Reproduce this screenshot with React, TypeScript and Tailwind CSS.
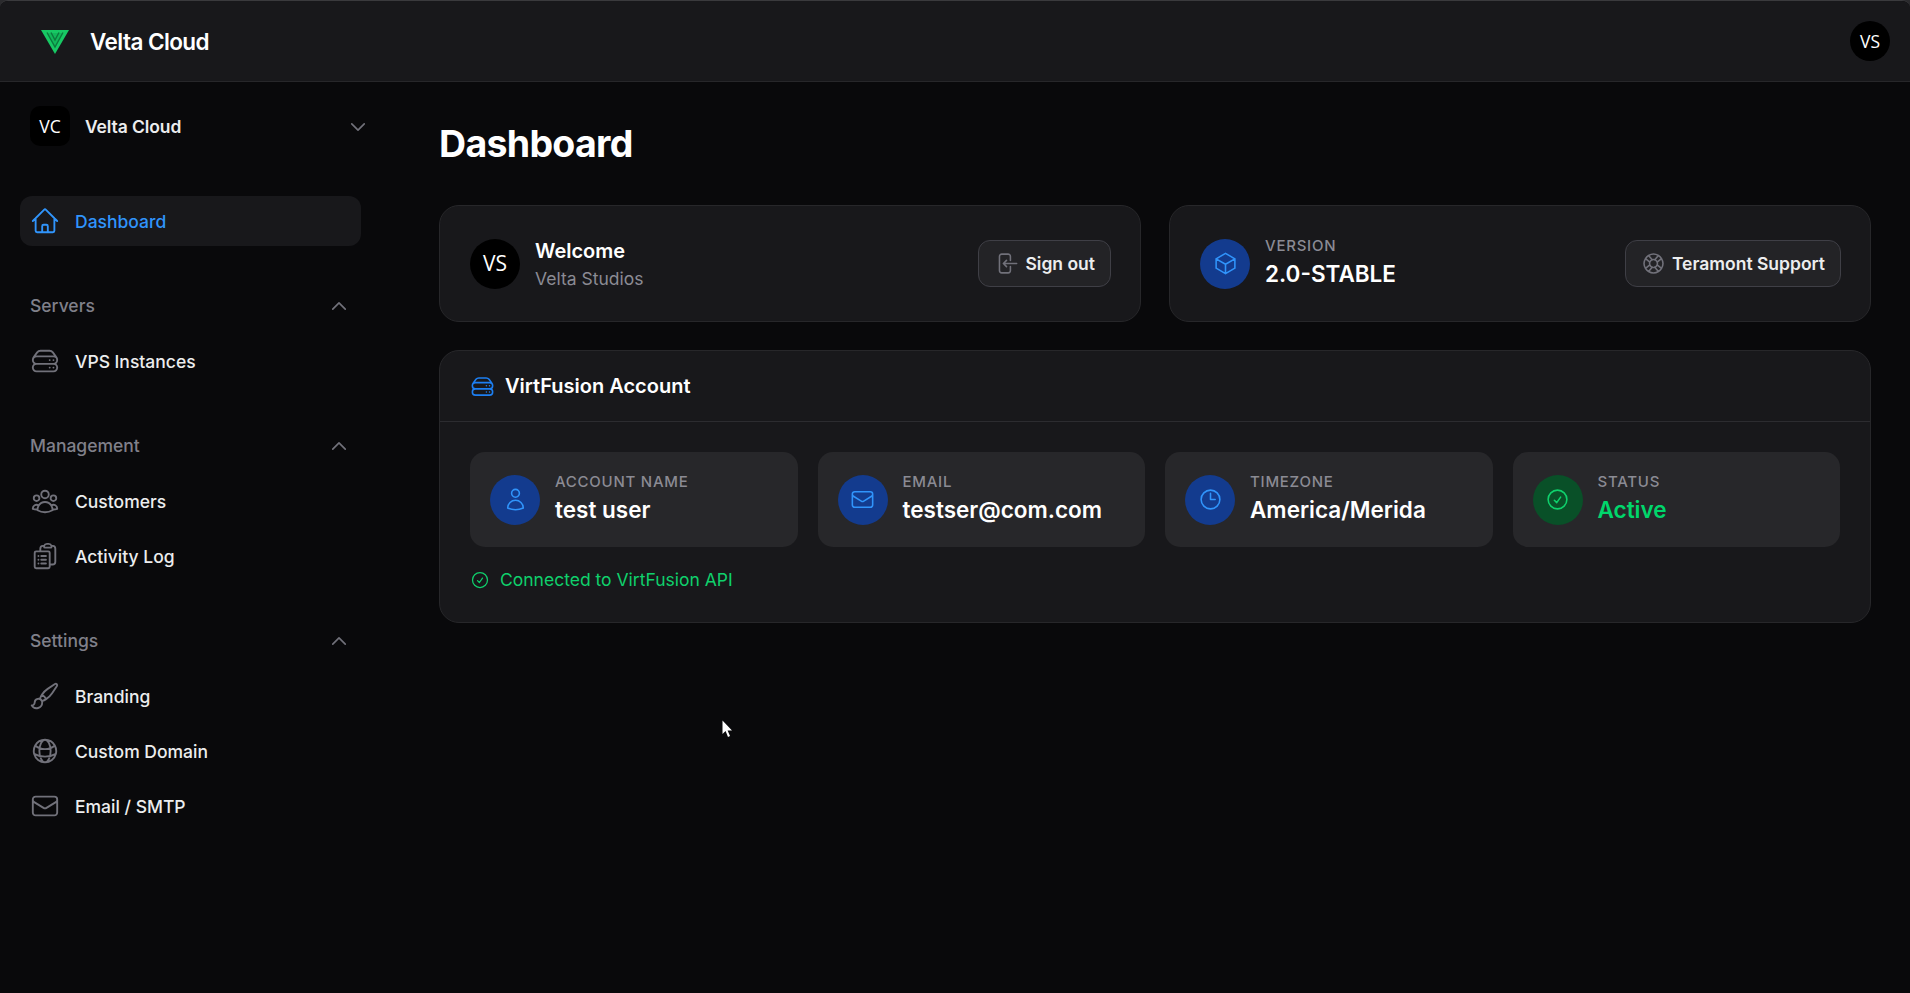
import React from "react";
import {
  HiOutlineArrowLeftEndOnRectangle,
  HiOutlineCheckCircle,
  HiOutlineChevronDown,
  HiOutlineChevronUp,
  HiOutlineClipboardDocumentList,
  HiOutlineClock,
  HiOutlineCube,
  HiOutlineEnvelope,
  HiOutlineGlobeAlt,
  HiOutlineHome,
  HiOutlineLifebuoy,
  HiOutlinePaintBrush,
  HiOutlineServerStack,
  HiOutlineUser,
  HiOutlineUserGroup,
} from "react-icons/hi2";

const NavItem = ({ icon: Icon, label, active }: { icon: React.ElementType; label: string; active?: boolean }) => (
  <div
    className={`flex h-[50px] w-[341px] items-center gap-[15px] rounded-[12px] px-[10px] text-[17.5px] font-medium ${
      active ? "bg-[#18181b] text-[#3094fb]" : "text-[#ecedee]"
    }`}
  >
    <Icon className={`h-[30px] w-[30px] shrink-0 ${active ? "text-[#3094fb]" : "text-[#71717a]"}`} />
    <span className="pt-[2px]">{label}</span>
  </div>
);

const NavSection = ({ title, children }: { title: string; children: React.ReactNode }) => (
  <div className="mt-[47px] w-[341px]">
    <div className="mb-[18px] flex h-[25px] items-center justify-between pr-[12px] pl-[10px] text-[17.5px] font-medium text-[#80808a]">
      <span className="pt-[2px]">{title}</span>
      <HiOutlineChevronUp strokeWidth={2} className="h-[20px] w-[20px] text-[#71717a]" />
    </div>
    <div className="flex flex-col gap-[5px]">{children}</div>
  </div>
);

const InfoTile = ({
  icon: Icon,
  label,
  value,
  green,
}: {
  icon: React.ElementType;
  label: string;
  value: string;
  green?: boolean;
}) => (
  <div className="flex h-[95px] items-center gap-[15px] rounded-[15px] bg-[#27272a] px-[20px]">
    <div
      className={`flex h-[50px] w-[50px] shrink-0 items-center justify-center rounded-full ${
        green ? "bg-[#095028] text-[#0fd06c]" : "bg-[#133b8e] text-[#3094fb]"
      }`}
    >
      <Icon className="h-[25px] w-[25px]" />
    </div>
    <div className="flex flex-col">
      <span className="text-[15px] leading-[20px] font-medium tracking-[0.75px] text-[#8b8b94] uppercase">{label}</span>
      <span className={`text-[22.5px] leading-[35px] font-semibold ${green ? "text-[#00d66b]" : "text-white"}`}>{value}</span>
    </div>
  </div>
);

const OutlineButton = ({ icon: Icon, label }: { icon: React.ElementType; label: string }) => (
  <div className="flex h-[47px] items-center gap-[6px] rounded-[12px] border border-[#3f3f46] bg-[#232326] px-[15px] text-[17.5px] font-semibold text-[#ecedee]">
    <Icon className="h-[25px] w-[25px] text-[#71717a]" />
    <span className="pt-[1px]">{label}</span>
  </div>
);

const App = () => {
  return (
    <div className="min-h-screen bg-[#2a2a2d] font-['Inter',sans-serif]">
      <div className="relative flex min-h-screen flex-col overflow-hidden rounded-t-[8px] border-t border-[#3a3a3d] bg-[#09090b]">
        <header className="flex h-[81px] shrink-0 items-center justify-between border-b border-[#27272a] bg-[#18181b] pr-[20px] pl-[41px]">
          <div className="flex items-center gap-[21px]">
            <svg width="28" height="24" viewBox="0 0 28 24" className="mt-[2px] shrink-0">
              <polygon points="0,0 28,0 14,24" fill="#17c964" />
              <polygon points="6,3 22,3 14,17" fill="#12b85a" />
              <path d="M6,2.5 L14,17 L22,2.5" fill="none" stroke="#0b7a3d" strokeWidth="1.4" />
              <path d="M10,2.5 L14,10 L18,2.5" fill="none" stroke="#0b7a3d" strokeWidth="1.4" />
            </svg>
            <span className="pt-[2px] text-[22.5px] font-semibold tracking-[-0.56px] text-white">Velta Cloud</span>
          </div>
          <div className="flex h-[40px] w-[40px] items-center justify-center rounded-full bg-black font-['Open_Sans',sans-serif] text-[17.5px] text-white">
            VS
          </div>
        </header>

        <div className="flex flex-1">
          <aside className="w-[399px] shrink-0 pt-[24px] pl-[20px]">
            <div className="flex w-[348px] items-center justify-between pl-[10px]">
              <div className="flex items-center gap-[15px]">
                <div className="flex h-[40px] w-[40px] items-center justify-center rounded-[10px] bg-black font-['Open_Sans',sans-serif] text-[17.5px] text-white">
                  VC
                </div>
                <span className="pt-[2px] text-[17.5px] font-semibold tracking-[-0.1px] text-[#ecedee]">Velta Cloud</span>
              </div>
              <HiOutlineChevronDown strokeWidth={2} className="mt-[2px] h-[20px] w-[20px] text-[#71717a]" />
            </div>

            <div className="mt-[50px]">
              <NavItem icon={HiOutlineHome} label="Dashboard" active />
            </div>

            <NavSection title="Servers">
              <NavItem icon={HiOutlineServerStack} label="VPS Instances" />
            </NavSection>
            <NavSection title="Management">
              <NavItem icon={HiOutlineUserGroup} label="Customers" />
              <NavItem icon={HiOutlineClipboardDocumentList} label="Activity Log" />
            </NavSection>
            <NavSection title="Settings">
              <NavItem icon={HiOutlinePaintBrush} label="Branding" />
              <NavItem icon={HiOutlineGlobeAlt} label="Custom Domain" />
              <NavItem icon={HiOutlineEnvelope} label="Email / SMTP" />
            </NavSection>
          </aside>

          <main className="flex-1 pt-[39px] pr-[39px] pl-[40px]">
            <h1 className="text-[37.5px] leading-[45px] font-bold tracking-[-0.7px] text-white">Dashboard</h1>

            <div className="mt-[39px] grid grid-cols-2 gap-[28px]">
              <div className="flex h-[117px] items-center justify-between rounded-[20px] border border-[#27272a] bg-[#18181b] pr-[29px] pl-[30px]">
                <div className="flex items-center gap-[15px]">
                  <div className="flex h-[50px] w-[50px] items-center justify-center rounded-full bg-black font-['Open_Sans',sans-serif] text-[21px] text-white">
                    VS
                  </div>
                  <div className="flex flex-col pt-[2px]">
                    <span className="text-[20px] leading-[28px] font-semibold text-white">Welcome</span>
                    <span className="text-[17.5px] leading-[28px] text-[#8b8b94]">Velta Studios</span>
                  </div>
                </div>
                <OutlineButton icon={HiOutlineArrowLeftEndOnRectangle} label="Sign out" />
              </div>

              <div className="flex h-[117px] items-center justify-between rounded-[20px] border border-[#27272a] bg-[#18181b] pr-[29px] pl-[30px]">
                <div className="flex items-center gap-[15px]">
                  <div className="flex h-[50px] w-[50px] items-center justify-center rounded-full bg-[#133b8e] text-[#3094fb]">
                    <HiOutlineCube className="h-[25px] w-[25px]" />
                  </div>
                  <div className="flex flex-col">
                    <span className="text-[15px] leading-[20px] font-medium tracking-[0.75px] text-[#8b8b94] uppercase">Version</span>
                    <span className="text-[22.5px] leading-[35px] font-semibold text-white">2.0-STABLE</span>
                  </div>
                </div>
                <OutlineButton icon={HiOutlineLifebuoy} label="Teramont Support" />
              </div>
            </div>

            <section className="mt-[28px] rounded-[20px] border border-[#27272a] bg-[#18181b]">
              <div className="flex h-[71px] items-center gap-[10px] border-b border-[#2c2c30] px-[30px]">
                <HiOutlineServerStack className="h-[25px] w-[25px] text-[#1d7ff2]" />
                <span className="text-[20px] font-semibold text-white">VirtFusion Account</span>
              </div>
              <div className="px-[30px] pt-[30px] pb-[30px]">
                <div className="grid grid-cols-4 gap-[20px]">
                  <InfoTile icon={HiOutlineUser} label="Account Name" value="test user" />
                  <InfoTile icon={HiOutlineEnvelope} label="Email" value="testser@com.com" />
                  <InfoTile icon={HiOutlineClock} label="Timezone" value="America/Merida" />
                  <InfoTile icon={HiOutlineCheckCircle} label="Status" value="Active" green />
                </div>
                <div className="mt-[20px] flex h-[25px] items-center gap-[10px] text-[17.5px] text-[#0fd06c]">
                  <HiOutlineCheckCircle className="h-[20px] w-[20px]" />
                  <span className="pt-[2px]">Connected to VirtFusion API</span>
                </div>
              </div>
            </section>
          </main>
        </div>

        {/* mouse pointer captured in the screenshot */}
        <svg width="12" height="18" viewBox="0 0 12 18" className="absolute top-[719px] left-[722px]">
          <path d="M0.5 0.5 L0.5 14 L3.6 11 L6 17 L8 16 L5.6 10.6 L10 10.6 Z" fill="#ffffff" />
        </svg>
      </div>
    </div>
  );
};

export default App;
